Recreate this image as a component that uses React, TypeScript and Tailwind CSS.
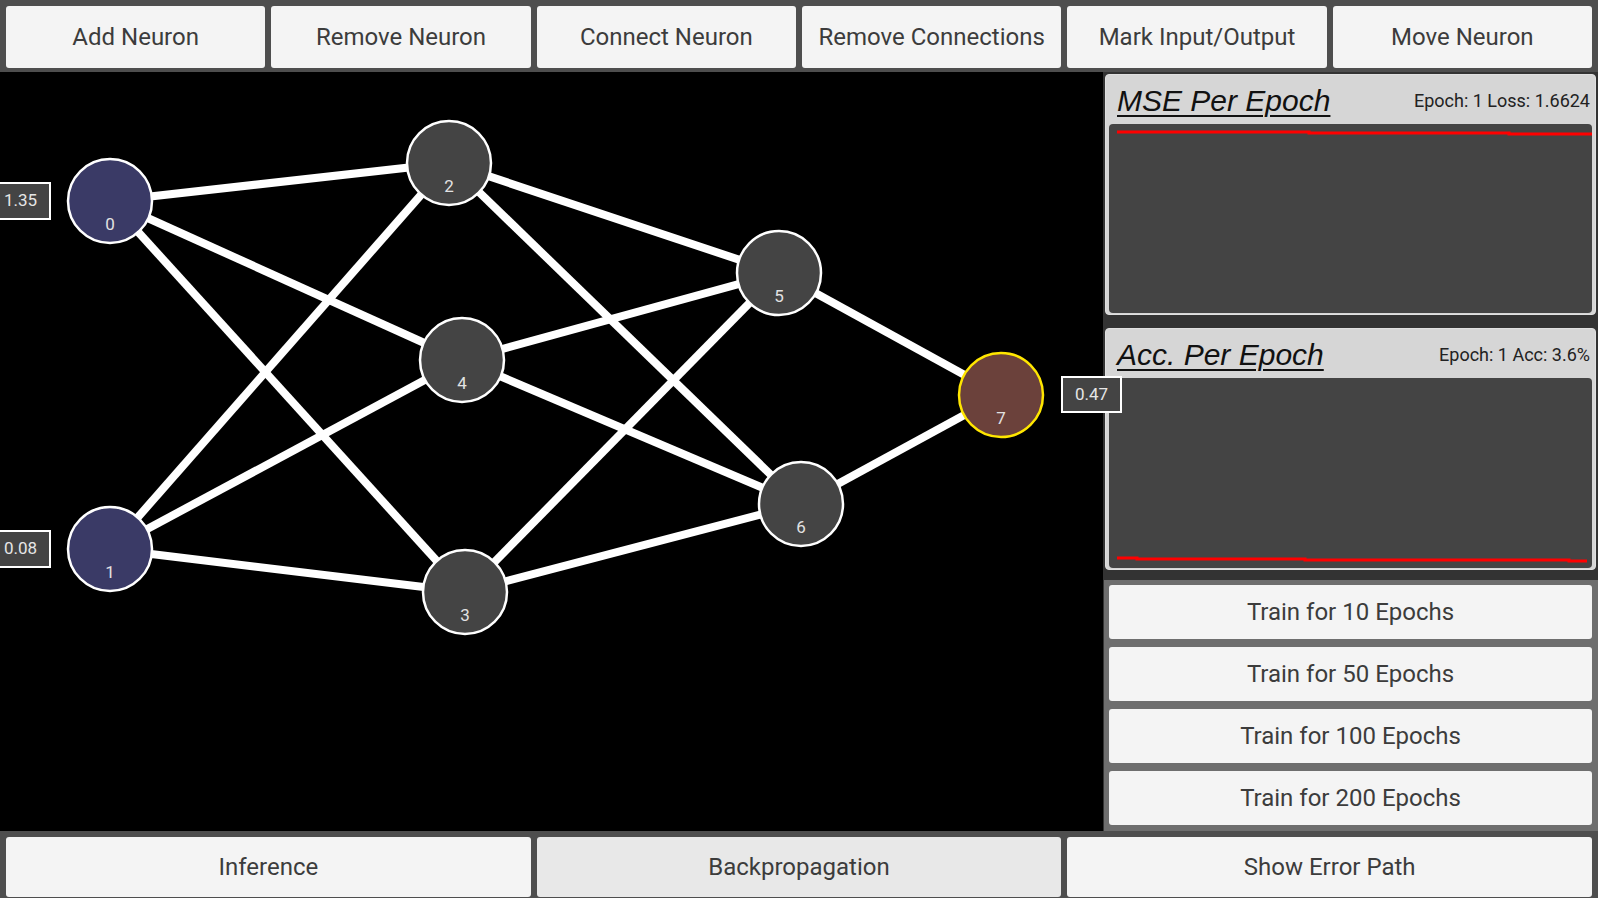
import React from 'react';

type Neuron = { id: number; x: number; y: number; fill: string; stroke: string };

const neurons: Neuron[] = [
    { id: 0, x: 110, y: 201, fill: '#3a3a66', stroke: '#ffffff' },
    { id: 1, x: 110, y: 549, fill: '#3a3a66', stroke: '#ffffff' },
    { id: 2, x: 449, y: 163, fill: '#444444', stroke: '#ffffff' },
    { id: 3, x: 465, y: 592, fill: '#444444', stroke: '#ffffff' },
    { id: 4, x: 462, y: 360, fill: '#444444', stroke: '#ffffff' },
    { id: 5, x: 779, y: 273, fill: '#444444', stroke: '#ffffff' },
    { id: 6, x: 801, y: 504, fill: '#444444', stroke: '#ffffff' },
    { id: 7, x: 1001, y: 395, fill: '#6b413b', stroke: '#ffe600' },
];

const connections: [number, number][] = [
    [0, 2], [0, 4], [0, 3],
    [1, 2], [1, 4], [1, 3],
    [2, 5], [2, 6],
    [4, 5], [4, 6],
    [3, 5], [3, 6],
    [5, 7], [6, 7],
];

const topActions = ['Add Neuron', 'Remove Neuron', 'Connect Neuron', 'Remove Connections', 'Mark Input/Output', 'Move Neuron'];
const trainOptions = [10, 50, 100, 200];

const font = { fontFamily: 'Roboto, "Liberation Sans", sans-serif' };

function NetworkCanvas() {
    const byId = (id: number) => neurons.find((n) => n.id === id)!;
    return (
        <div className="relative flex-1 bg-black">
            {/* viewBox uses page coordinates so node positions read straight off the screen */}
            <svg className="absolute inset-0" width={1103} height={759} viewBox="0 72 1103 759">
                {connections.map(([a, b]) => {
                    const na = byId(a);
                    const nb = byId(b);
                    return <line key={`${a}-${b}`} x1={na.x} y1={na.y} x2={nb.x} y2={nb.y} stroke="#ffffff" strokeWidth={8} />;
                })}
                {neurons.map((n) => (
                    <g key={n.id}>
                        <circle cx={n.x} cy={n.y} r={42} fill={n.fill} stroke={n.stroke} strokeWidth={2.5} />
                        <text x={n.x} y={n.y + 29} textAnchor="middle" fontSize={17} fill="#e2e2e2" style={font}>
                            {n.id}
                        </text>
                    </g>
                ))}
            </svg>
        </div>
    );
}

function ValueBox({ value, className }: { value: string; className: string }) {
    return (
        <div className={`absolute z-20 flex items-center justify-center bg-[#444] border-2 border-white text-[17px] text-[#e6e6e6] ${className}`}>
            {value}
        </div>
    );
}

function ChartCard({ title, stat, points }: { title: string; stat: string; points: string }) {
    return (
        <div className="flex-1 flex flex-col rounded-[4px] bg-[#d6d6d6] border border-[#e0e0e0] px-[3px] pb-[1px]">
            <div className="h-[49px] flex items-center justify-between pl-[8px] pr-[2px] pt-[2px]">
                <span
                    className="italic text-[30px] leading-none text-[#111] underline decoration-2 underline-offset-[4px]"
                    style={{ fontFamily: '"Liberation Sans", Arial, sans-serif' }}
                >
                    {title}
                </span>
                <span className="text-[18px] text-[#222]">{stat}</span>
            </div>
            <div className="relative flex-1 rounded-[4px] bg-[#444]">
                <svg className="absolute inset-0 w-full h-full">
                    <polyline points={points} fill="none" stroke="#ff0000" strokeWidth={3} />
                </svg>
            </div>
        </div>
    );
}

export default function App() {
    return (
        <div className="relative w-[1598px] h-[898px] bg-black flex flex-col overflow-hidden" style={font}>
            {/* Tool bar */}
            <div className="h-[72px] flex gap-[6px] px-[6px] pt-[6px] pb-[4px] bg-[#4e4e4e]">
                {topActions.map((label) => (
                    <button key={label} className="flex-1 rounded-[3px] bg-[#f4f4f4] text-[24px] text-[#3c3c3c]">
                        {label}
                    </button>
                ))}
            </div>

            <div className="h-[759px] flex">
                <NetworkCanvas />

                {/* Training side panel */}
                <div className="w-[495px] flex flex-col bg-[#333] pt-[2px] px-[2px]">
                    <div className="h-[241px] flex flex-col">
                        <ChartCard
                            title="MSE Per Epoch"
                            stat="Epoch: 1 Loss: 1.6624"
                            points="8,8 200,8 200,9 400,9 400,10 600,10 600,11 880,11 880,12 960,12 960,12 1000,12"
                        />
                    </div>
                    <div className="h-[242px] mt-[13px] flex flex-col">
                        <ChartCard
                            title="Acc. Per Epoch"
                            stat="Epoch: 1 Acc: 3.6%"
                            points="8,180 28,180 28,181 196,181 196,182 460,182 460,183 478,183"
                        />
                    </div>
                    <div className="flex-1 mt-[10px] ml-[-1px] mr-[-2px] flex flex-col gap-[8px] bg-[#6e6e6e] pl-[5px] pr-[6px] pt-[5px]">
                        {trainOptions.map((n) => (
                            <button key={n} className="h-[54px] rounded-[3px] bg-[#f4f4f4] text-[24px] text-[#3c3c3c]">
                                Train for {n} Epochs
                            </button>
                        ))}
                    </div>
                </div>
            </div>

            {/* Mode bar */}
            <div className="flex-1 flex gap-[6px] px-[6px] pt-[6px] pb-[1px] bg-[#4e4e4e]">
                <button className="flex-1 rounded-[3px] bg-[#f4f4f4] text-[24px] text-[#3c3c3c]">Inference</button>
                <button className="flex-1 rounded-[3px] bg-[#e8e8e8] text-[24px] text-[#3c3c3c]">Backpropagation</button>
                <button className="flex-1 rounded-[3px] bg-[#f4f4f4] text-[24px] text-[#3c3c3c]">Show Error Path</button>
            </div>

            <ValueBox value="1.35" className="left-[-10px] top-[182px] w-[61px] h-[38px]" />
            <ValueBox value="0.08" className="left-[-10px] top-[530px] w-[61px] h-[38px]" />
            <ValueBox value="0.47" className="left-[1061px] top-[376px] w-[61px] h-[37px]" />
        </div>
    );
}
